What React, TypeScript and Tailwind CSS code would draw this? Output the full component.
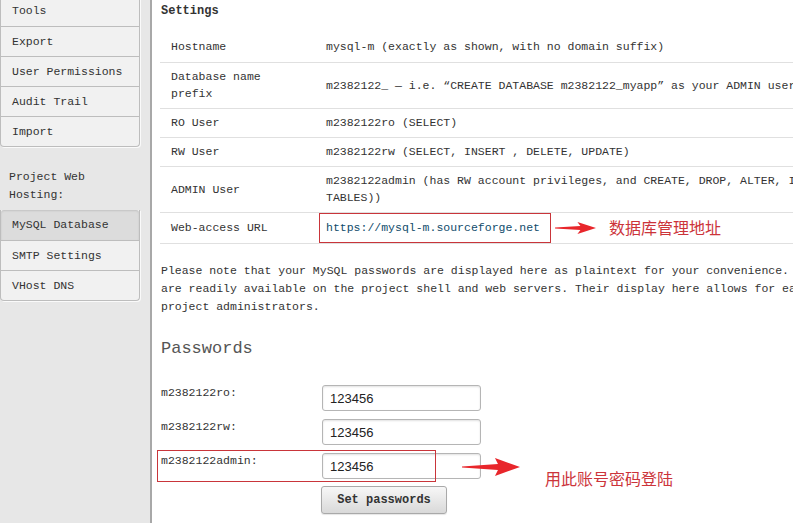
import React from "react";

const mono = { fontFamily: '"Liberation Mono", "DejaVu Sans Mono", monospace' };

function RedArrow({ width, height }: { width: number; height: number }) {
  // tapered red arrow, thin tail widening towards the head
  const mid = height / 2;
  const headStart = width * 0.62;
  return (
    <svg width={width} height={height} viewBox={`0 0 ${width} ${height}`}>
      <polygon
        points={`0,${mid - 0.6} ${headStart},${mid - height * 0.16} ${headStart - 3},0 ${width},${mid} ${headStart - 3},${height} ${headStart},${mid + height * 0.16} 0,${mid + 0.6}`}
        fill="#e8262b"
      />
    </svg>
  );
}

const topItems = ["Tools", "Export", "User Permissions", "Audit Trail", "Import"];
const webItems = ["MySQL Database", "SMTP Settings", "VHost DNS"];

function SideGroup({ items, active }: { items: string[]; active?: string }) {
  return (
    <div className="w-[140px] rounded-b-[4px] border border-t-0 border-[#bdbdbd] bg-[#f1f1f1] shadow-[1px_1px_0_#fafafa]">
      {items.map((it, i) => (
        <div
          key={it}
          className={
            "flex h-[30px] items-center pl-[11px] text-[11.5px] text-[#333] " +
            (i > 0 ? "border-t border-[#bdbdbd] " : "") +
            (it === active
              ? "rounded-t-[3px] bg-[#dcdcdc] shadow-[inset_0_1px_2px_rgba(0,0,0,0.12)]"
              : "")
          }
        >
          {it}
        </div>
      ))}
    </div>
  );
}

const rows: { label: React.ReactNode; value: React.ReactNode; h: string }[] = [
  { label: "Hostname", value: "mysql-m (exactly as shown, with no domain suffix)", h: "h-[30px]" },
  {
    label: (
      <>
        Database name
        <br />
        prefix
      </>
    ),
    value: "m2382122_ — i.e. “CREATE DATABASE m2382122_myapp” as your ADMIN user",
    h: "h-[46px]",
  },
  { label: "RO User", value: "m2382122ro (SELECT)", h: "h-[29px]" },
  { label: "RW User", value: "m2382122rw (SELECT, INSERT , DELETE, UPDATE)", h: "h-[29px]" },
  {
    label: "ADMIN User",
    value: (
      <>
        m2382122admin (has RW account privileges, and CREATE, DROP, ALTER, INDEX, LOCK
        <br />
        TABLES))
      </>
    ),
    h: "h-[46px]",
  },
];

const passwordRows = ["m2382122ro:", "m2382122rw:", "m2382122admin:"];

export default function App() {
  return (
    <div className="flex h-[523px] w-[793px] overflow-hidden bg-white text-[#333]" style={mono}>
      {/* Sidebar */}
      <aside className="flex w-[152px] shrink-0 flex-col border-r-2 border-[#a8a8a8] bg-[#e7e7e7]">
        <div className="-mt-[4px]">
          <SideGroup items={topItems} />
        </div>
        <div className="mt-[21px] pl-[9px] text-[11.5px] leading-[18px] text-[#333]">
          Project Web
          <br />
          Hosting:
        </div>
        <div className="mt-[6px]">
          <SideGroup items={webItems} active="MySQL Database" />
        </div>
      </aside>

      {/* Main */}
      <main className="relative flex-1 overflow-hidden pl-[8px]">
        <h3 className="ml-[1px] mt-[3px] text-[12px] font-bold leading-[17px] text-[#333]">Settings</h3>

        <table className="mt-[12px] w-[720px] table-fixed border-collapse text-[11.5px] leading-[17px]">
          <colgroup>
            <col className="w-[159px]" />
            <col />
          </colgroup>
          <tbody>
            {rows.map((r, i) => (
              <tr key={i} className="border-b border-[#e0e0e0]">
                <td className={"py-0 pl-[11px] align-middle whitespace-nowrap " + r.h}>{r.label}</td>
                <td className={"py-0 pl-[7px] align-middle whitespace-nowrap " + r.h}>{r.value}</td>
              </tr>
            ))}
            <tr className="border-b border-[#e0e0e0]">
              <td className="h-[31px] py-0 pl-[11px] align-middle whitespace-nowrap">Web-access URL</td>
              <td className="h-[31px] py-0 align-middle whitespace-nowrap">
                <div className="flex items-center">
                  <div className="flex h-[30px] w-[232px] items-center border border-[#c9353a] pl-[6px] text-[#0f4c6b]">
                    https://mysql-m.sourceforge.net
                  </div>
                  <div className="ml-[4px] flex items-center">
                    <RedArrow width={41} height={12} />
                  </div>
                  <span
                    className="ml-[13px] text-[16px] text-[#cc343a]"
                    style={{ fontFamily: '"Noto Sans CJK SC", sans-serif' }}
                  >
                    数据库管理地址
                  </span>
                </div>
              </td>
            </tr>
          </tbody>
        </table>

        <p className="ml-[1px] mt-[18px] whitespace-nowrap text-[11.5px] leading-[18px] text-[#333]">
          Please note that your MySQL passwords are displayed here as plaintext for your convenience. These passwords
          <br />
          are readily available on the project shell and web servers. Their display here allows for easy reference by
          <br />
          project administrators.
        </p>

        <h2 className="ml-[1px] mt-[23px] text-[17px] leading-[20px] text-[#555]">Passwords</h2>

        <form className="relative ml-[1px] mt-[26px] flex flex-col gap-[8px]">
          {passwordRows.map((p) => (
            <div key={p} className="flex items-start">
              <label className="w-[161px] -mt-[1px] text-[11.5px] leading-[17px] text-[#333]">{p}</label>
              <input
                readOnly
                value="123456"
                className="h-[26px] w-[159px] rounded-[3px] border border-[#b5b5b5] bg-white px-[7px] pt-[2px] text-[13px] text-[#222] shadow-[inset_0_1px_2px_rgba(0,0,0,0.12)] outline-none"
                style={{ fontFamily: '"Liberation Sans", Arial, sans-serif' }}
              />
            </div>
          ))}
          <div className="-mt-[1px] pl-[160px]">
            <button
              type="button"
              className="h-[28px] w-[126px] rounded-[3px] border border-[#a9a9a9] bg-gradient-to-b from-[#f7f7f7] to-[#d9d9d9] text-[12px] font-bold text-[#333] shadow-[0_1px_1px_rgba(0,0,0,0.1)]"
              style={mono}
            >
              Set passwords
            </button>
          </div>

          {/* annotation overlay on the admin row */}
          <div className="pointer-events-none absolute left-[-4px] top-[65px] h-[32px] w-[279px] border border-[#c9353a]" />
          <div className="pointer-events-none absolute left-[301px] top-[73px]">
            <RedArrow width={58} height={18} />
          </div>
          <span
            className="pointer-events-none absolute left-[384px] top-[82px] whitespace-nowrap text-[16px] leading-[22px] text-[#cc343a]"
            style={{ fontFamily: '"Noto Sans CJK SC", sans-serif' }}
          >
            用此账号密码登陆
          </span>
        </form>
      </main>
    </div>
  );
}
